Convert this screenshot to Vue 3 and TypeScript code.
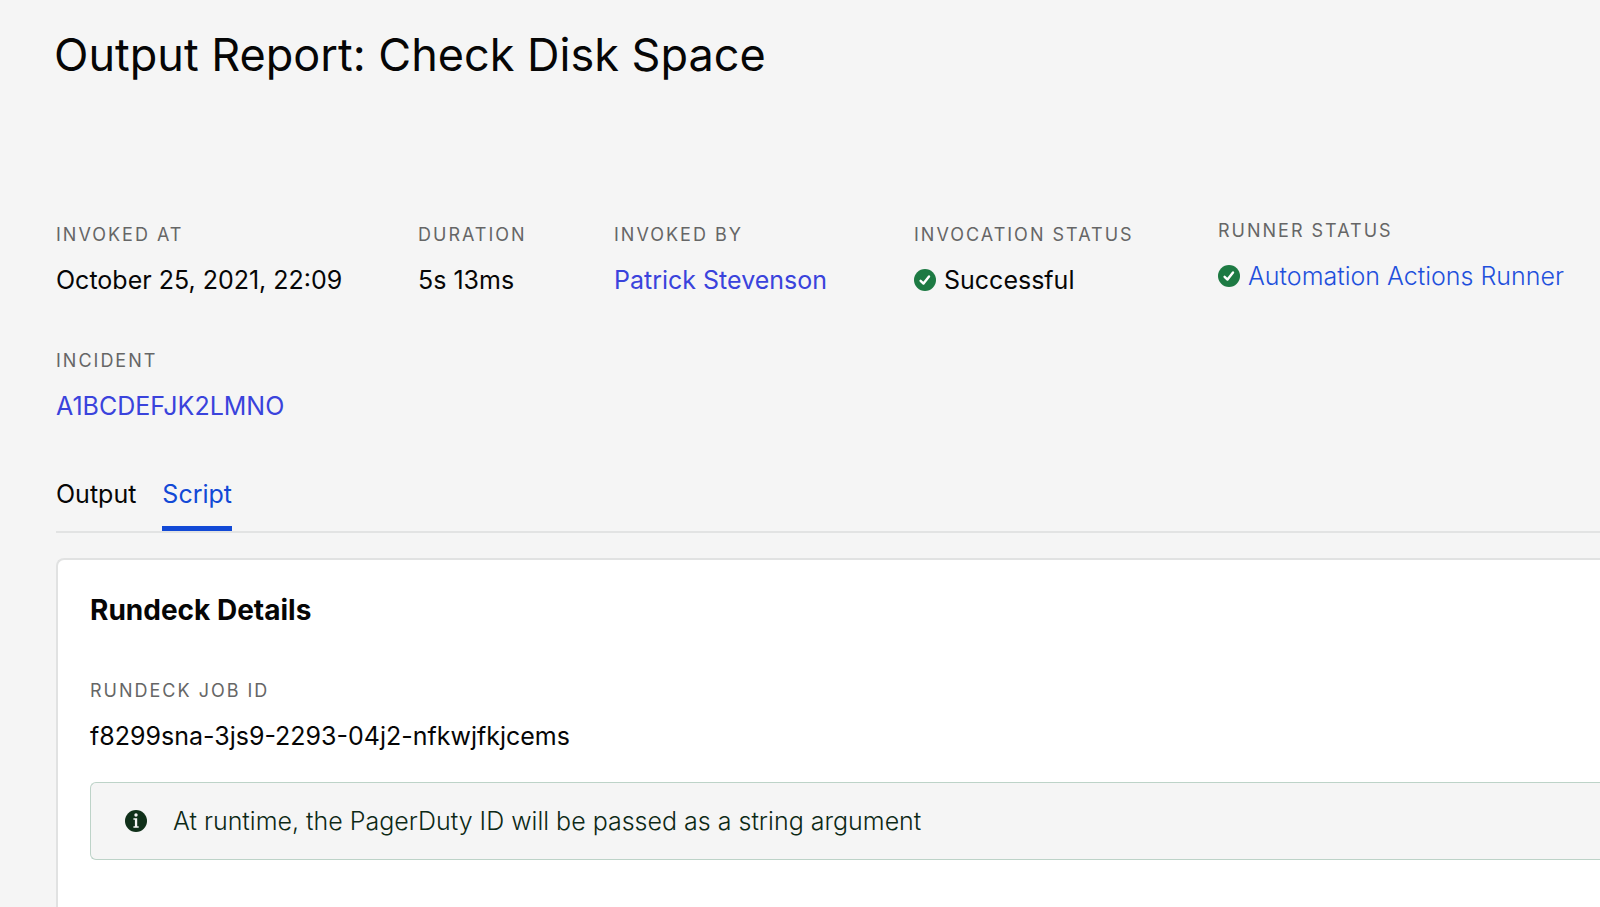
<script setup lang="ts">
import { ref } from 'vue'

interface Fact {
  label: string
  value: string
  link?: 'indigo' | 'blue'
  ok?: boolean
  raised?: boolean
}

const facts: Fact[] = [
  { label: 'INVOKED AT', value: 'October 25, 2021, 22:09' },
  { label: 'DURATION', value: '5s 13ms' },
  { label: 'INVOKED BY', value: 'Patrick Stevenson', link: 'indigo' },
  { label: 'INVOCATION STATUS', value: 'Successful', ok: true },
  { label: 'RUNNER STATUS', value: 'Automation Actions Runner', link: 'blue', ok: true, raised: true },
  { label: 'INCIDENT', value: 'A1BCDEFJK2LMNO', link: 'indigo' },
]

const tabs = ['Output', 'Script']
const active = ref('Script')
</script>

<template>
  <main class="page">
    <h1 class="title">Output Report: Check Disk Space</h1>

    <dl class="facts">
      <div v-for="fact in facts" :key="fact.label" class="fact" :class="{ raised: fact.raised }">
        <dt class="label">{{ fact.label }}</dt>
        <dd class="value">
          <svg v-if="fact.ok" class="icon" viewBox="0 0 22 22" aria-hidden="true">
            <circle cx="11" cy="11" r="11" fill="#1d7a43" />
            <path d="M6.6 11.8 9.5 14.6 15 7.4" fill="none" stroke="#fff" stroke-width="2.4" stroke-linecap="round" stroke-linejoin="round" />
          </svg>
          <a v-if="fact.link" href="#" :class="fact.link">{{ fact.value }}</a>
          <span v-else>{{ fact.value }}</span>
        </dd>
      </div>
    </dl>

    <div class="tabs" role="tablist">
      <button
        v-for="tab in tabs"
        :key="tab"
        type="button"
        role="tab"
        class="tab"
        :class="{ active: active === tab }"
        :aria-selected="active === tab"
        @click="active = tab"
      >{{ tab }}</button>
    </div>

    <section class="panel">
      <h2 class="heading">Rundeck Details</h2>
      <dl class="job">
        <dt class="label">RUNDECK JOB ID</dt>
        <dd class="value">f8299sna-3js9-2293-04j2-nfkwjfkjcems</dd>
      </dl>
      <div class="notice" role="note">
        <svg class="icon" viewBox="0 0 22 22" aria-hidden="true">
          <circle cx="11" cy="11" r="11" fill="#10301a" />
          <circle cx="11" cy="5" r="1.7" fill="#f5f5f5" />
          <path d="M8.4 8.3h3.8v8h1.5v1.5H8.4v-1.5h1.5V9.8H8.4z" fill="#f5f5f5" />
        </svg>
        <p class="message">At runtime, the PagerDuty ID will be passed as a string argument</p>
      </div>
    </section>
  </main>
</template>

<style>
body {
  background: #f5f5f5;
}
</style>

<style scoped>
.page {
  box-sizing: border-box;
  min-height: 100vh;
  padding: 24px 0 0 56px;
  display: flex;
  flex-direction: column;
  overflow: hidden;
  background: #f5f5f5;
  color: #060606;
  font-family: Inter, Roboto, sans-serif;
  font-size: 25px;
  font-weight: 400;
  line-height: 36px;
}

.title {
  margin: 0 0 137px -2px;
  font-size: 45px;
  font-weight: 400;
  line-height: 62px;
}

.facts {
  display: grid;
  grid-template-columns: 362fr 196fr 300fr 304fr 382fr;
  row-gap: 51px;
  align-items: end;
  margin: 0;
  white-space: nowrap;
}

.raised {
  padding-bottom: 4px;
  margin-top: -4px;
}

.label {
  margin-bottom: 15px;
  color: #666;
  font-size: 18px;
  line-height: 24px;
  letter-spacing: 2px;
}

.value {
  display: flex;
  align-items: center;
  gap: 8px;
  margin: 0;
}

.icon {
  flex: none;
  width: 22px;
  height: 22px;
}

a {
  text-decoration: none;
}

.indigo {
  color: #3a43dc;
}

.blue {
  color: #1f50dc;
  font-weight: 300;
}

.tabs {
  display: flex;
  gap: 26px;
  margin-top: 52px;
  border-bottom: 2px solid #e2e3e3;
}

.tab {
  padding: 0 0 14px;
  border: 0;
  border-bottom: 5px solid transparent;
  background: none;
  color: inherit;
  font: inherit;
  cursor: pointer;
}

.tab.active {
  border-bottom-color: #1249d6;
  color: #1249d6;
}

.panel {
  flex: 1;
  margin-top: 25px;
  padding: 32px 0 46px 32px;
  border: 2px solid #e1e2e2;
  border-width: 2px 0 0 2px;
  border-radius: 8px 0 0 0;
  background: #fff;
}

.heading {
  margin: 0 0 51px;
  font-size: 28px;
  font-weight: 700;
  line-height: 36px;
}

.job {
  margin: 0 0 28px;
}

.notice {
  display: flex;
  align-items: center;
  gap: 26px;
  padding: 20px 34px;
  border: 1px solid #bdd3c8;
  border-right: 0;
  border-radius: 6px 0 0 6px;
  background: #f5f5f5;
  color: #0d2916;
}

.message {
  margin: 0;
  font-weight: 300;
}
</style>
